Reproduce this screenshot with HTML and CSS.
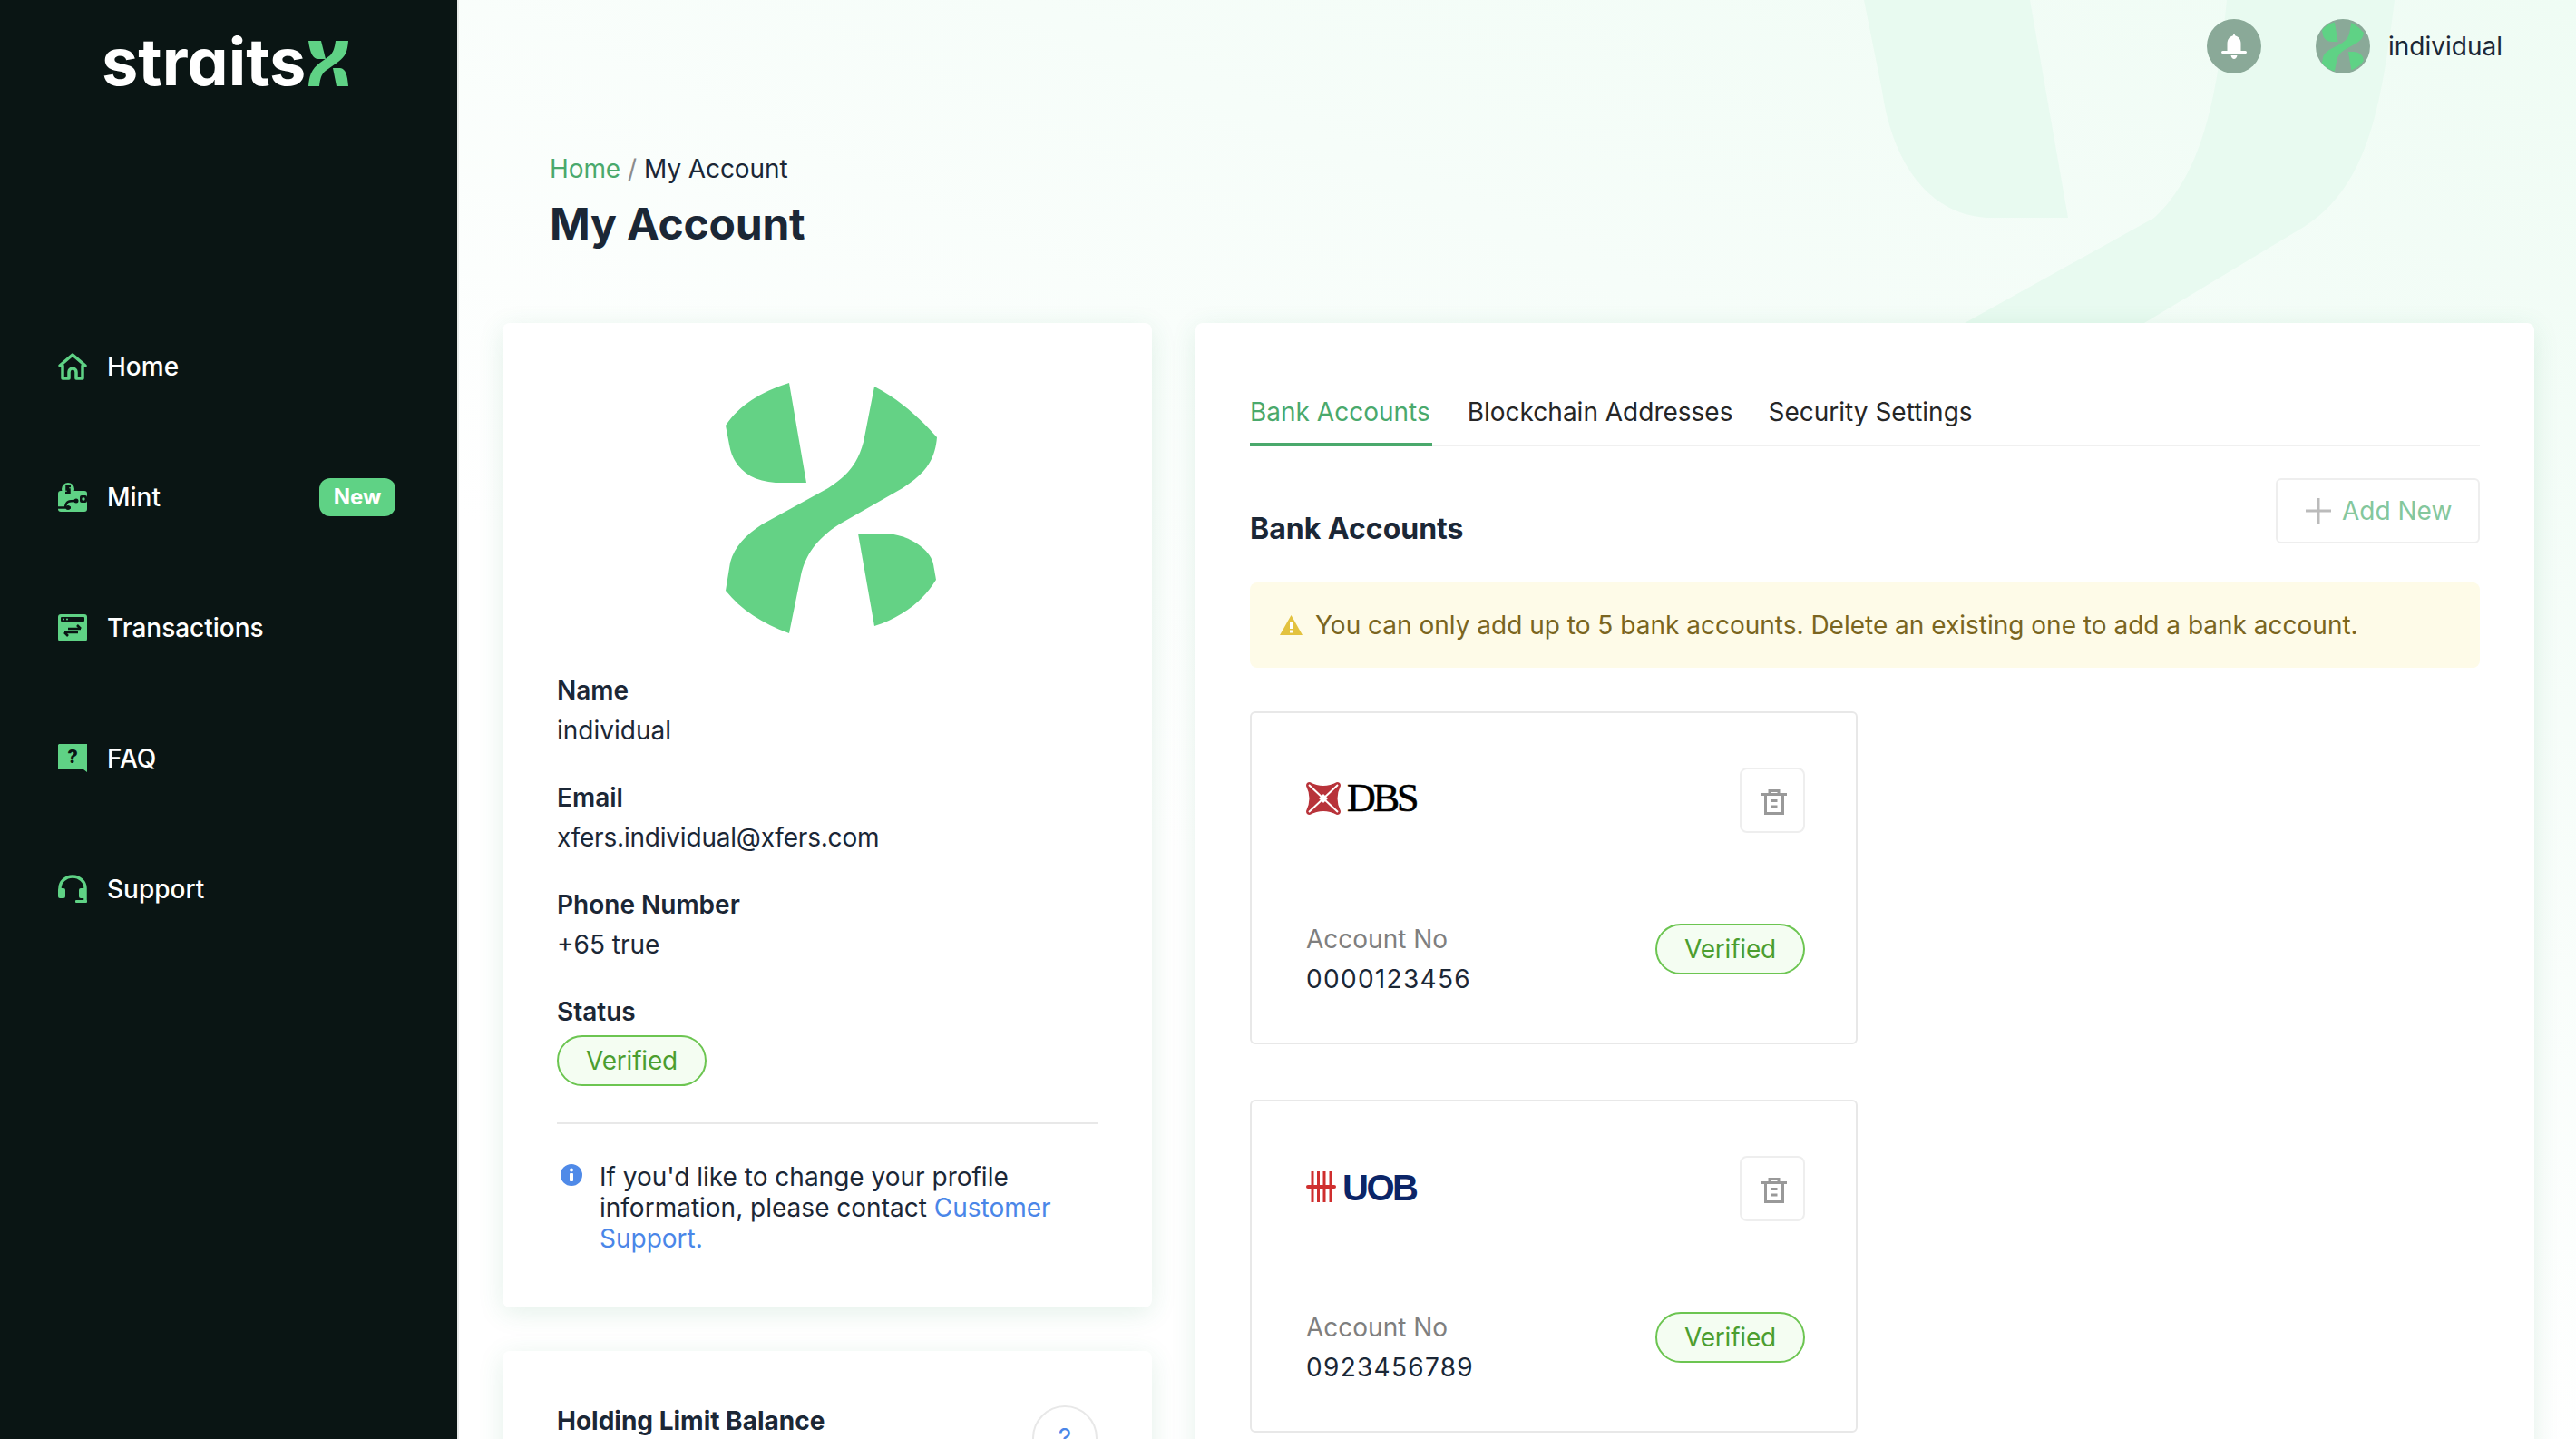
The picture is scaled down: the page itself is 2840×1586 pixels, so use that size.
FILE: index.html
```html
<!DOCTYPE html>
<html lang="en">
<head>
	<meta charset="UTF-8">
	<title>My Account</title>
	<link rel="stylesheet" href="styles.css">
</head>
<body>

<svg class="defs" width="0" height="0">
	<symbol id="mark" viewBox="0 0 233 276">
		<path d="M70 0L89 110H55C25 108 8 92 4 68L0 47C15 25 38 10 70 0Z"/>
		<path d="M164 4C198 22 217 43 233 60C231 85 220 100 195 116L125 156C100 172 88 190 83 212L70 276C40 265 17 250 0 229L5 198C10 180 22 168 40 156L113 116C135 102 146 88 152 65Z"/>
		<path d="M146 166H178C205 168 226 185 229 200L232 217C218 240 195 258 164 268Z"/>
	</symbol>
</svg>

<div id="wrapper">
	<div class="sidebar">
		<div class="logo">
			<span class="logo_text">straits</span>
			<svg class="logo_x" viewBox="0 0 45 50"><path d="M0 0H14L19 20H11C5 20 2 14 0 0ZM30 0H44C43 12 41 17 33 23L19 33C14 37 13 42 12 50H0C1 39 3 31 13 24L24 16C27 13 29 8 30 0ZM27 30H35C41 31 43 37 44 50H31Z"/></svg>
		</div>
		<ul class="nav">
			<li>
				<svg class="nav_icon" viewBox="0 0 32 32"><path class="line" d="M16 3L30 15H27V29H20V22A4 4 0 0 0 12 22V29H5V15H2Z"/></svg>
				Home
			</li>
			<li>
				<svg class="nav_icon" viewBox="0 0 32 32">
					<rect class="fill" x="0" y="9" width="32" height="23" rx="3"/>
					<circle class="fill" cx="11" cy="7" r="7"/>
					<path class="cut" d="M14 4H9.500V7.500H12.500V11H8M11 2.500V12.500"/>
					<path class="cut" d="M0 27.500H14M8 27C9 20 12 20 20 20"/>
					<circle class="dark" cx="20" cy="20" r="2.500"/>
					<circle class="dark" cx="11" cy="27.500" r="2.500"/>
					<rect class="dark" x="24" y="14" width="8" height="8" rx="2"/>
					<circle class="fill" cx="28" cy="18" r="1.700"/>
				</svg>
				Mint
				<span class="new">New</span>
			</li>
			<li>
				<svg class="nav_icon" viewBox="0 0 32 32">
					<rect class="fill" x="0" y="1" width="32" height="30" rx="3"/>
					<rect class="dark" x="3" y="4" width="26" height="5" rx="1"/>
					<circle class="fill" cx="6" cy="6.500" r="1"/>
					<circle class="fill" cx="10" cy="6.500" r="1"/>
					<path class="cut" d="M11 17H25M21 13L25 17M22 21H7M11 25L7 21"/>
				</svg>
				Transactions
			</li>
			<li>
				<svg class="nav_icon" viewBox="0 0 32 32">
					<path class="fill" d="M1 0H32V31L28 28H0V1Z"/>
					<text class="faq_mark" x="16" y="21" text-anchor="middle">?</text>
				</svg>
				FAQ
			</li>
			<li>
				<svg class="nav_icon" viewBox="0 0 32 32">
					<path class="line" d="M2 18V15A14 13 0 0 1 30 15V29"/>
					<rect class="fill" x="0" y="15" width="8" height="11" rx="2"/>
					<rect class="fill" x="23" y="15" width="8" height="11" rx="2"/>
					<rect class="fill" x="19" y="28" width="13" height="3" rx="1"/>
				</svg>
				Support
			</li>
		</ul>
	</div>

	<div class="main">
		<svg class="main_bg" viewBox="0 0 2334 356" width="2334" height="356">
			<path d="M1549 0H1732L1774 240H1684C1614 235 1579 170 1569 100Z"/>
			<path d="M1949 0H2134C2119 120 2104 210 2029 253L1858 356H1660L1869 240C1924 190 1939 100 1949 0Z"/>
		</svg>

		<div class="topbar">
			<div class="bell">
				<svg viewBox="0 0 28 28" width="28" height="28"><path d="M14 0L15.500 2.500C19.500 3.500 21.500 7 21.500 11V19H26.500A1 1 0 0 1 26.500 22H1.500A1 1 0 0 1 1.500 19H6.500V11C6.500 7 8.500 3.500 12.500 2.500ZM10.500 24H17.500C17 26.500 15.500 28 14 28C12.500 28 11 26.500 10.500 24Z"/></svg>
			</div>
			<div class="avatar">
				<svg viewBox="0 0 233 276" width="46" height="55"><use href="#mark"/></svg>
			</div>
			<span class="username">individual</span>
		</div>

		<div class="page_head">
			<div class="crumb"><a>Home</a><i>/</i>My Account</div>
			<h1>My Account</h1>
		</div>

		<div class="columns">
			<div class="left_col">
				<div class="card profile">
					<svg class="profile_logo" viewBox="0 0 233 276"><use href="#mark"/></svg>
					<div class="field">
						<b>Name</b>
						<span>individual</span>
					</div>
					<div class="field">
						<b>Email</b>
						<span class="email">xfers.individual@xfers.com</span>
					</div>
					<div class="field">
						<b>Phone Number</b>
						<span>+65 true</span>
					</div>
					<div class="field status">
						<b>Status</b>
						<div><em class="pill">Verified</em></div>
					</div>
					<div class="note">
						<svg viewBox="0 0 24 24" width="24" height="24"><circle cx="12" cy="12" r="12" fill="#4f8ae8"/><circle cx="12" cy="6.500" r="2" fill="#fff"/><rect x="10" y="10" width="4" height="9" rx="1" fill="#fff"/></svg>
						<p>If you'd like to change your profile information, please contact <a>Customer Support.</a></p>
					</div>
				</div>
				<div class="card holding">
					<b>Holding Limit Balance</b>
					<div class="help">?</div>
				</div>
			</div>

			<div class="card right_card">
				<ul class="tabs">
					<li class="active">Bank Accounts</li>
					<li>Blockchain Addresses</li>
					<li>Security Settings</li>
				</ul>
				<div class="section_head">
					<h2>Bank Accounts</h2>
					<div class="add_btn">
						<svg viewBox="0 0 28 28" width="28" height="28"><path d="M14 0V28M0 14H28"/></svg>
						Add New
					</div>
				</div>
				<div class="alert">
					<svg viewBox="0 0 25 22" width="25" height="22"><path d="M12.500 0L25 22H0Z" fill="#e3c23f"/><rect x="11" y="7" width="3" height="8" fill="#fff"/><rect x="11" y="16.500" width="3" height="3" fill="#fff"/></svg>
					You can only add up to 5 bank accounts. Delete an existing one to add a bank account.
				</div>

				<div class="bank">
					<div class="bank_top">
						<div class="bank_logo">
							<svg viewBox="0 0 38 36" width="38" height="36">
								<path d="M4 0Q19 8 34 0Q38 0 38 4Q31 18 38 32Q38 36 34 36Q19 28 4 36Q0 36 0 32Q7 18 0 4Q0 0 4 0Z" fill="#b8333a"/>
								<path d="M3 3L35 33M35 3L3 33" stroke="#fff" stroke-width="2"/>
								<path d="M19 13L24 18L19 23L14 18Z" fill="#fff"/>
							</svg>
							<span class="dbs">DBS</span>
						</div>
						<div class="del_btn">
							<svg viewBox="0 0 28 28" width="28" height="28"><use href="#trash"/></svg>
						</div>
					</div>
					<div class="bank_bottom">
						<div class="acct">
							<span>Account No</span>
							<span class="acct_no">0000123456</span>
						</div>
						<em class="pill">Verified</em>
					</div>
				</div>

				<div class="bank">
					<div class="bank_top">
						<div class="bank_logo">
							<svg viewBox="0 0 33 34" width="33" height="34">
								<path d="M7 0V34M13.500 0V34M20 0V34M27 0V34" stroke="#cf2e2e" stroke-width="3"/>
								<path d="M2 17H31" stroke="#cf2e2e" stroke-width="4" stroke-linecap="round"/>
							</svg>
							<span class="uob">UOB</span>
						</div>
						<div class="del_btn">
							<svg viewBox="0 0 28 28" width="28" height="28"><use href="#trash"/></svg>
						</div>
					</div>
					<div class="bank_bottom">
						<div class="acct">
							<span>Account No</span>
							<span class="acct_no">0923456789</span>
						</div>
						<em class="pill">Verified</em>
					</div>
				</div>
			</div>
		</div>
	</div>
</div>

<svg class="defs" width="0" height="0">
	<symbol id="trash" viewBox="0 0 28 28">
		<path d="M0 5.500H28M9 5V1.500H19V5M4.500 6V26.500H23.500V6M10.500 12.500H17.500M10.500 19H17.500" fill="none" stroke="#999" stroke-width="3"/>
	</symbol>
</svg>

</body>
</html>
```

FILE: styles.css
```css
*{
	margin: 0;
	padding: 0;
	box-sizing: border-box;
}
li{
	list-style: none;
}
body{
	width: 2840px;
	height: 1586px;
	overflow: hidden;
	font-family: "Inter", "Liberation Sans", sans-serif;
	font-size: 28px;
	line-height: 34px;
	color: #1b2736;
	background: #fff;
}
.defs{
	position: absolute;
}
em{
	font-style: normal;
}

#wrapper{
	display: flex;
	height: 1586px;
	overflow: hidden;
}

/* sidebar */
.sidebar{
	width: 506px;
	flex-shrink: 0;
	background: #0a1514;
	border-right: 2px solid #e8ebe9;
}
.logo{
	display: flex;
	align-items: flex-end;
	height: 95px;
	padding-left: 112px;
	margin-bottom: 237px;
}
.logo_text{
	font-size: 72px;
	line-height: 72px;
	margin-bottom: -9px;
	font-weight: 700;
	color: #fff;
	font-feature-settings: "cv11";
}
.logo_x{
	width: 45px;
	height: 50px;
	margin-left: 3px;
	fill: #5fd285;
}
.nav li{
	display: flex;
	align-items: center;
	height: 144px;
	padding: 0 68px 0 64px;
	color: #fff;
	font-weight: 500;
}
.nav_icon{
	width: 32px;
	height: 32px;
	margin-right: 22px;
}
.nav_icon .fill{
	fill: #5fd285;
}
.nav_icon .dark{
	fill: #0a1514;
}
.nav_icon .line{
	fill: none;
	stroke: #5fd285;
	stroke-width: 3.500;
	stroke-linejoin: round;
}
.nav_icon .cut{
	fill: none;
	stroke: #0a1514;
	stroke-width: 2.500;
}
.faq_mark{
	font-size: 20px;
	font-weight: 800;
	fill: #0a1514;
}
.new{
	margin-left: auto;
	width: 84px;
	height: 42px;
	line-height: 42px;
	text-align: center;
	border-radius: 12px;
	background: #5fd285;
	font-size: 24px;
	font-weight: 700;
}

/* main */
.main{
	flex: 1;
	position: relative;
	padding: 0 46px 0 48px;
	background: linear-gradient(205deg, #effcf4 0%, #f6fdf9 30%, #fff 62%);
}
.main_bg{
	position: absolute;
	left: 0;
	top: 0;
	fill: #e8faf0;
}
.topbar{
	position: relative;
	display: flex;
	justify-content: flex-end;
	align-items: center;
	height: 102px;
	padding: 0 35px 0 0;
	margin-bottom: 67px;
}
.bell,.avatar{
	display: flex;
	align-items: center;
	justify-content: center;
	width: 60px;
	height: 60px;
	border-radius: 50%;
	background: #8aa998;
	overflow: hidden;
}
.bell{
	margin-right: 60px;
}
.bell svg{
	fill: #fff;
}
.avatar{
	margin-right: 20px;
}
.avatar svg{
	fill: #5fd285;
}
.page_head{
	position: relative;
	padding-left: 52px;
	margin-bottom: 77px;
}
.crumb{
	margin-bottom: 12px;
	letter-spacing: -0.100px;
}
.crumb a{
	color: #4aa96c;
}
.crumb i{
	font-style: normal;
	color: #8c8c8c;
	margin: 0 8px;
}
h1{
	font-size: 48px;
	line-height: 64px;
	font-weight: 700;
	letter-spacing: -0.200px;
}

.columns{
	position: relative;
	display: flex;
	gap: 48px;
	align-items: flex-start;
}
.card{
	background: #fff;
	border-radius: 8px;
	box-shadow: 0 6px 28px rgba(50,150,90,0.13);
}
.left_col{
	width: 716px;
	flex-shrink: 0;
}

/* profile card */
.profile{
	padding: 66px 60px 59px 60px;
	margin-bottom: 48px;
}
.profile_logo{
	display: block;
	width: 233px;
	height: 276px;
	margin: 0 auto 46px;
	fill: #64d285;
	transform: translateX(4px);
}
.field{
	margin-bottom: 40px;
}
.field b{
	display: block;
	font-weight: 600;
	margin-bottom: 10px;
}
.field span{
	display: block;
}
.field .email{
	letter-spacing: -0.200px;
}
.status{
	padding-bottom: 40px;
	margin-bottom: 41px;
	border-bottom: 2px solid #e8e8e8;
}
.status b{
	margin-bottom: 9px;
}
.pill{
	display: inline-block;
	height: 56px;
	line-height: 52px;
	padding: 0 30px;
	border: 2px solid #6cc551;
	border-radius: 28px;
	background: #f4fdf2;
	color: #4b9e2f;
	letter-spacing: -0.200px;
}
.note{
	display: flex;
	align-items: flex-start;
}
.note svg{
	flex-shrink: 0;
	margin: 3px 19px 0 4px;
}
.note a,.help{
	color: #4a86e8;
}

.holding{
	display: flex;
	justify-content: space-between;
	padding: 60px;
}
.holding b{
	font-weight: 700;
}
.help{
	width: 72px;
	height: 72px;
	line-height: 68px;
	text-align: center;
	border: 2px solid #e8e8e8;
	border-radius: 50%;
}

/* right card */
.right_card{
	flex: 1;
	height: 1400px;
	padding: 81px 60px 0 60px;
}
.tabs{
	display: flex;
	gap: 39px;
	border-bottom: 2px solid #f0f0f0;
	margin-bottom: 35px;
}
.tabs li{
	height: 55px;
	margin-bottom: -2px;
	color: #262626;
}
.tabs .active{
	padding-right: 2px;
	color: #4aa96c;
	border-bottom: 4px solid #4aa96c;
}
.section_head{
	display: flex;
	justify-content: space-between;
	margin-bottom: 37px;
}
h2{
	font-size: 32px;
	line-height: 44px;
	font-weight: 700;
	margin-top: 34px;
}
.add_btn{
	display: flex;
	align-items: center;
	width: 225px;
	height: 72px;
	padding-left: 31px;
	border: 2px solid #eee;
	border-radius: 6px;
	color: #84c79d;
}
.add_btn svg{
	margin-right: 12px;
	stroke: #bbb;
	stroke-width: 3;
}
.alert{
	display: flex;
	align-items: center;
	height: 94px;
	padding-left: 33px;
	margin-bottom: 48px;
	background: #fefbe8;
	border-radius: 8px;
	color: #7a6520;
}
.alert svg{
	margin-right: 14px;
}

/* bank cards */
.bank{
	width: 670px;
	height: 367px;
	padding: 60px 56px 0 60px;
	margin-bottom: 61px;
	border: 2px solid #e8e8e8;
	border-radius: 6px;
}
.bank_top{
	display: flex;
	justify-content: space-between;
	margin-bottom: 100px;
}
.bank_logo{
	display: flex;
	align-items: center;
	height: 36px;
	margin-top: 16px;
}
.dbs{
	margin-left: 7px;
	font-family: "Liberation Serif", serif;
	font-size: 44px;
	letter-spacing: -3px;
	-webkit-text-stroke: 0.600px #000;
	color: #000;
}
.uob{
	margin: 2px 0 0 7px;
	font-family: "Liberation Sans", sans-serif;
	font-size: 40px;
	font-weight: 700;
	letter-spacing: -2.500px;
	color: #0b2568;
}
.del_btn{
	display: flex;
	align-items: center;
	justify-content: center;
	width: 72px;
	height: 72px;
	padding: 4px 0 0 4px;
	border: 2px solid #eee;
	border-radius: 8px;
}
.bank_bottom{
	display: flex;
	justify-content: space-between;
}
.acct{
	display: flex;
	flex-direction: column;
	gap: 10px;
	color: #7f7f7f;
}
.acct .acct_no{
	color: #1b2736;
	letter-spacing: 1.300px;
}
```
